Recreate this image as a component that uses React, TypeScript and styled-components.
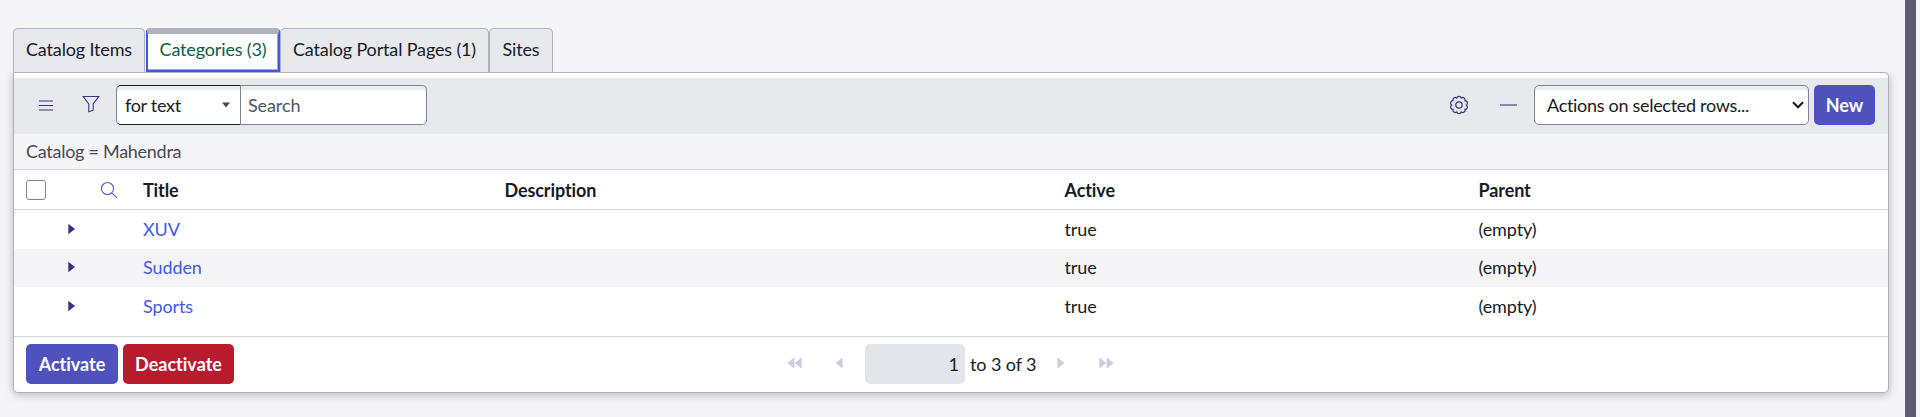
import React from "react";
import styled, { createGlobalStyle } from "styled-components";

const GlobalStyle = createGlobalStyle`
  *, *::before, *::after { box-sizing: border-box; }
  body {
    margin: 0;
    background: #f5f5f8;
    color: #161b26;
    font: 18px/24px Lato, "Liberation Sans", sans-serif;
    font-variant-ligatures: none;
  }
`;

const Page = styled.div`
  display: flex;
  height: 417px;
  overflow: hidden;
`;

const Content = styled.main`
  flex: 1;
  padding: 28px 16px 0 13px;
`;

const ScrollBar = styled.div`
  width: 15px;
  border-right: 4px solid #f5f5f8;
  background: #5d5c70;
`;

const Tabs = styled.div`
  display: flex;
  height: 44px;
`;

const Tab = styled.button<{ $width: number; $active?: boolean }>`
  width: ${(p) => p.$width}px;
  height: 44px;
  padding: 0 0 4px;
  border: 1px solid #adb2be;
  border-bottom: 0;
  border-radius: 5px 5px 0 0;
  background: #e8e9ed;
  color: #161b26;
  font: inherit;
  letter-spacing: -0.15px;
  white-space: nowrap;
  ${(p) =>
    p.$active &&
    `
    margin-left: 1px;
    padding: 0 0 7px;
    border-top: 6px solid #adb2be;
    border-left: 2px solid #4059e6;
    border-right: 2px solid #4059e6;
    border-bottom: 2px solid #4059e6;
    border-radius: 4px 4px 0 0;
    box-shadow: inset 0 -1px #9aa7f2, inset -1px 0 #9aa7f2;
    background: #fff;
    color: #0b6045;
  `}
`;

const Panel = styled.section`
  display: flex;
  flex-direction: column;
  height: 321px;
  padding-top: 5px;
  border: 1px solid #adb1c2;
  border-radius: 0 5px 5px 5px;
  background: #fff;
  box-shadow: 0 2px 8px rgba(0, 0, 0, 0.25);
  clip-path: inset(0 -12px -12px -12px);
`;

const Toolbar = styled.div`
  display: flex;
  align-items: center;
  height: 56px;
  padding: 0 13px 2px 12px;
  background: #e8e9ed;
`;

const IconSlot = styled.span<{ $width: number }>`
  display: flex;
  align-items: center;
  justify-content: center;
  width: ${(p) => p.$width}px;
  color: #37357f;
`;

const Spacer = styled.div`
  flex: 1;
`;

const Field = styled.div<{ $width: number; $kind: "menu" | "search" | "actions" }>`
  display: flex;
  align-items: center;
  justify-content: space-between;
  width: ${(p) => p.$width}px;
  height: 40px;
  border: 1px solid #7c8394;
  border-color: ${(p) => (p.$kind === "menu" ? "#161b26 #7c8394 #161b26 #7c8394" : "#7c8394")};
  border-left-width: ${(p) => (p.$kind === "search" ? 0 : 1)}px;
  border-radius: ${(p) => ({ menu: "5px 0 0 5px", search: "0 5px 5px 0", actions: "5px" })[p.$kind]};
  padding: ${(p) => ({ menu: "0 10px 0 8px", search: "0 0 0 7px", actions: "0 4px 0 12px" })[p.$kind]};
  background: #fff;
  box-shadow: inset 0 4px 1px #ebecee;
  color: ${(p) => (p.$kind === "search" ? "#50545f" : "#161b26")};
  letter-spacing: ${(p) => (p.$kind === "search" ? -0.1 : -0.3)}px;
`;

const Button = styled.button<{ $width: number; $danger?: boolean }>`
  width: ${(p) => p.$width}px;
  height: 40px;
  padding: 0;
  border: 0;
  border-radius: 5px;
  background: ${(p) => (p.$danger ? "#b71b2e" : "#4f52bd")};
  color: #fff;
  font: inherit;
  font-weight: 700;
`;

const Breadcrumb = styled.div`
  height: 36px;
  padding: 5px 12px 0;
  border-bottom: 1px solid #d0d2dd;
  background: #f5f5f8;
  color: #464a54;
  letter-spacing: -0.27px;
`;

const Row = styled.div<{ $height: number; $shaded?: boolean; $header?: boolean }>`
  display: grid;
  grid-template-columns: 50px 29px 50px 361.5px 560px 414px 1fr;
  align-items: center;
  height: ${(p) => p.$height}px;
  padding-bottom: ${(p) => (p.$header ? 0 : 2)}px;
  border-bottom: ${(p) => (p.$header ? "1px solid #d0d2dd" : "0")};
  background: ${(p) => (p.$shaded ? "#f5f5f8" : "#fff")};
  font-weight: ${(p) => (p.$header ? 700 : 400)};
  letter-spacing: -0.1px;
`;

const TitleLink = styled.a`
  color: #4059e6;
`;

const CheckBox = styled.span`
  width: 20px;
  height: 20px;
  margin-left: 12px;
  border: 1px solid #7c8394;
  border-radius: 3px;
  background: #fff;
`;

const IconCell = styled.span<{ $left: number }>`
  display: flex;
  padding-left: ${(p) => p.$left}px;
`;

const Footer = styled.div`
  display: flex;
  align-items: center;
  height: 56px;
  margin-top: auto;
  padding: 0 12px 1px;
  border-top: 1px solid #d0d2dd;
`;

const Gap = styled.span<{ $width: number }>`
  flex: none;
  width: ${(p) => p.$width}px;
`;

const PageInput = styled.div`
  width: 100px;
  height: 40px;
  padding: 8px 6px 0 0;
  border-radius: 5px;
  background: #e4e5ea;
  text-align: right;
`;

const Total = styled.span`
  width: 92px;
  padding-left: 5px;
  letter-spacing: -0.1px;
`;

const Arrow = ({ double, back }: { double?: boolean; back?: boolean }) => {
  const w = double ? 15 : 8;
  return (
    <svg width={w} height="14" viewBox={`0 0 ${w} 14`} fill="#cdcbe0">
      <g transform={back ? `translate(${w} 0) scale(-1 1)` : undefined}>
        <path d="M0.3 0.2V11.8L7.3 6Z" />
        {double && <path d="M7.6 0.2V11.8L14.6 6Z" />}
      </g>
    </svg>
  );
};

const Gear = () => {
  const lobes = 10;
  const points = Array.from({ length: lobes }, (_, i) => {
    const a = ((i + 0.5) / lobes) * Math.PI * 2;
    return `${(10 + 7.4 * Math.sin(a)).toFixed(2)} ${(10 - 7.4 * Math.cos(a)).toFixed(2)}`;
  });
  const outline = `M${points[lobes - 1]} ${points.map((p) => `A2.4 2.4 0 0 1 ${p}`).join(" ")}Z`;
  return (
    <svg width="20" height="20" viewBox="0 0 20 20" fill="none" stroke="currentColor" strokeWidth="1.2">
      <path d={outline} />
      <circle cx="10" cy="10" r="3.2" />
    </svg>
  );
};

const rows = [
  { title: "XUV", height: 39 },
  { title: "Sudden", height: 38 },
  { title: "Sports", height: 39 },
];

export default function App() {
  return (
    <>
      <GlobalStyle />
      <Page>
        <Content>
          <Tabs>
            <Tab $width={132}>Catalog Items</Tab>
            <Tab $width={134} $active>Categories (3)</Tab>
            <Tab $width={209}>Catalog Portal Pages (1)</Tab>
            <Tab $width={64}>Sites</Tab>
          </Tabs>
          <Panel>
            <Toolbar>
              <IconSlot $width={40}>
                <svg width="14" height="11" viewBox="0 0 14 11" stroke="currentColor" strokeWidth="1.1">
                  <path d="M0 1H14M0 5.5H14M0 10H14" />
                </svg>
              </IconSlot>
              <IconSlot $width={50}>
                <svg width="18" height="20" viewBox="0 0 18 20" fill="none" stroke="currentColor" strokeWidth="1.1">
                  <path d="M1.2 1.5H16.8L11.2 9V15.2L6.8 16.8V9Z" />
                </svg>
              </IconSlot>
              <Field $width={125} $kind="menu">
                for text
                <svg width="8" height="6" viewBox="0 0 8 6" fill="#464a54">
                  <path d="M0 0.5H8L4 5.5Z" />
                </svg>
              </Field>
              <Field $width={186} $kind="search">Search</Field>
              <Spacer />
              <IconSlot $width={50}>
                <Gear />
              </IconSlot>
              <IconSlot $width={49}>
                <svg width="17" height="3" viewBox="0 0 17 3" stroke="currentColor" strokeWidth="1.1">
                  <path d="M0 1H17" />
                </svg>
              </IconSlot>
              <Gap $width={1} />
              <Field $width={275} $kind="actions">
                Actions on selected rows...
                <svg width="12" height="8" viewBox="0 0 12 8" fill="none" stroke="#161b26" strokeWidth="2.2">
                  <path d="M1 1.2L6 6.2L11 1.2" />
                </svg>
              </Field>
              <Gap $width={5} />
              <Button $width={61}>New</Button>
            </Toolbar>
            <Breadcrumb>Catalog = Mahendra</Breadcrumb>
            <Row $height={40} $header>
              <CheckBox />
              <span />
              <IconCell $left={7}>
                <svg width="18" height="18" viewBox="0 0 18 18" fill="none" stroke="#5a58bd" strokeWidth="1.1">
                  <circle cx="7.5" cy="7.5" r="6" />
                  <path d="M11.8 11.8L17 16.8" />
                </svg>
              </IconCell>
              <span>Title</span>
              <span>Description</span>
              <span>Active</span>
              <span>Parent</span>
            </Row>
            {rows.map((row, i) => (
              <Row key={row.title} $height={row.height} $shaded={i === 1}>
                <span />
                <IconCell $left={4}>
                  <svg width="8" height="12" viewBox="0 0 8 12" fill="#37357f">
                    <path d="M0.3 0.8V11.2L7 6Z" />
                  </svg>
                </IconCell>
                <span />
                <TitleLink>{row.title}</TitleLink>
                <span />
                <span>true</span>
                <span>(empty)</span>
              </Row>
            ))}
            <Footer>
              <Button $width={92}>Activate</Button>
              <Gap $width={5} />
              <Button $width={111} $danger>Deactivate</Button>
              <Gap $width={553} />
              <Arrow double back />
              <Gap $width={33} />
              <Arrow back />
              <Gap $width={22} />
              <PageInput>1</PageInput>
              <Total>to 3 of 3</Total>
              <Arrow />
              <Gap $width={34} />
              <Arrow double />
            </Footer>
          </Panel>
        </Content>
        <ScrollBar />
      </Page>
    </>
  );
}
